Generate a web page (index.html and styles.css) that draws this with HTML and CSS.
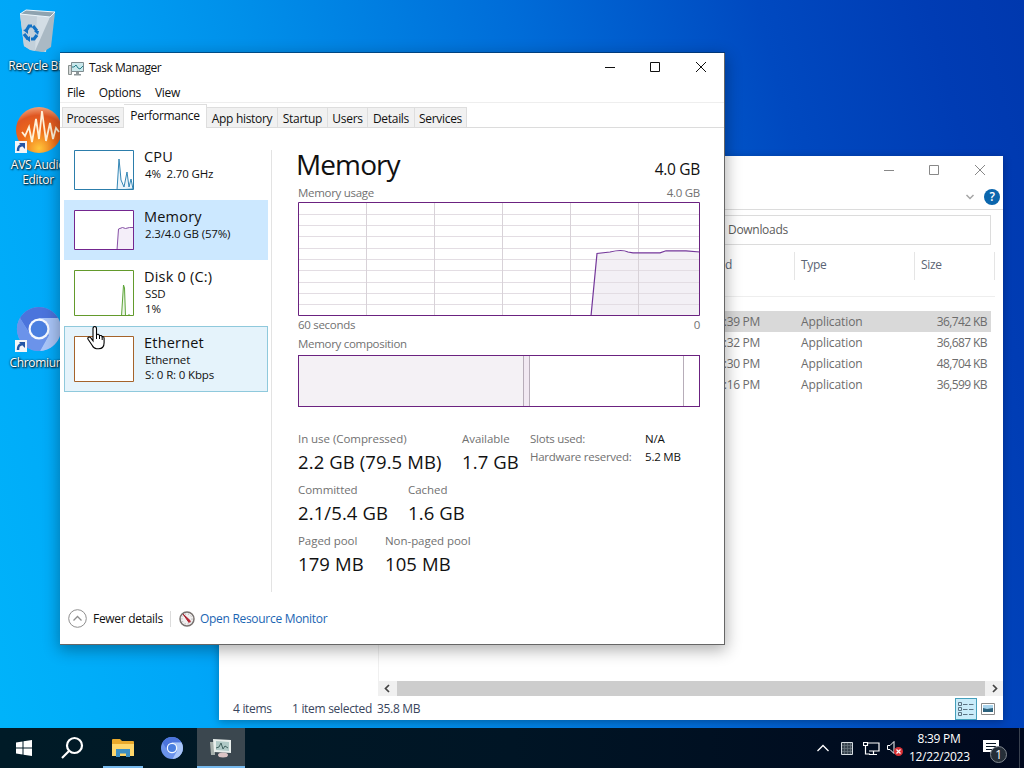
FILE: index.html
```html
<!DOCTYPE html>
<html lang="en">
<head>
  <meta charset="UTF-8">
  <meta name="viewport" content="width=device-width, initial-scale=1.0">
  <title>Task Manager</title>
  <link rel="stylesheet" href="styles.css">
</head>
<body>
  <div class="desktop">
    <!-- Desktop icons -->
    <div class="shortcut recycle">
      <svg width="44" height="46" viewBox="0 0 44 46">
        <path d="M4 6l6-4 29 2-5 5z" fill="#8fa3b0"/>
        <path d="M4 6l30 3-4 35-15-2-7-4z" fill="#d3dde5"/>
        <path d="M34 9l5-5-4 35-8 5-8-1z" fill="#aab9c4"/>
        <path d="M4 6l17 2-2 35-5-1-6-4z" fill="#c3d0da"/>
        <path d="M4 6l6-4 29 2-5 5z" fill="none" stroke="#eef5fa" stroke-width="1"/>
        <g fill="none" stroke="#1271c4" stroke-width="3.200"><path d="M10 23l3-5h3M17 18l4 5M21 27l-3 4h-3M12 31l-4-5"/></g>
        <path d="M18 23h5l-1 4zM14 28v6l-4-3zM7 22l5-1v5z" fill="#1271c4"/>
      </svg>
      <span>Recycle Bin</span>
    </div>
    <div class="shortcut avs">
      <svg width="50" height="50" viewBox="0 0 50 50">
        <defs><radialGradient id="orange" cx="50%" cy="90%" r="90%"><stop offset="0" stop-color="#ffc53a"/><stop offset=".45" stop-color="#ee6a18"/><stop offset=".8" stop-color="#e05722"/><stop offset="1" stop-color="#f0a078"/></radialGradient></defs>
        <circle cx="26" cy="24" r="23" fill="url(#orange)"/>
        <path d="M9 26l3 4 4-9 3 15 4-23 3 20 3-28 4 30 4-18 3 16 3-11 3 4" fill="none" stroke="#fff1d8" stroke-width="1.800"/>
        <rect x="2" y="35" width="12" height="12" fill="#f4f5f7"/>
        <path d="M5 45c0-4 1-5 4-6" fill="none" stroke="#2355a5" stroke-width="2.500"/><path d="M6 37h6v6z" fill="#2355a5"/>
      </svg>
      <span>AVS Audio<br>Editor</span>
    </div>
    <div class="shortcut chromium">
      <svg width="50" height="48" viewBox="0 0 50 48">
        <circle cx="26" cy="23" r="22" fill="#7da5f3"/>
        <path d="M7 12A22 22 0 0 1 45 12L26 12l-9 16z" fill="#4b74dc"/>
        <path d="M26 12h19a22 22 0 0 1-18 33l9-16z" fill="#a9c5f8"/>
        <path d="M7 12A22 22 0 0 0 27 45l9-16-19 0z" fill="#6b93ea"/>
        <circle cx="26" cy="23" r="10.500" fill="#f4f9ff"/><circle cx="26" cy="23" r="8.300" fill="#4a7fe0"/>
        <rect x="2" y="34" width="12" height="12" fill="#f4f5f7"/>
        <path d="M5 44c0-4 1-5 4-6" fill="none" stroke="#2355a5" stroke-width="2.500"/><path d="M6 36h6v6z" fill="#2355a5"/>
      </svg>
      <span>Chromium</span>
    </div>

    <!-- File Explorer -->
    <div class="window explorer">
      <div class="controls">
        <svg width="12" height="12"><path d="M0 6.500h10"/></svg>
        <svg width="12" height="12"><path d="M.5 1.500h9v9h-9z"/></svg>
        <svg width="12" height="12"><path d="M1 1l10 10M11 1L1 11"/></svg>
      </div>
      <div class="ribbon">
        <svg width="10" height="8" viewBox="0 0 10 8"><path d="M1.500 2l3.500 3.500 3.500-3.500" fill="none" stroke="#a5a5a5" stroke-width="1.500"/></svg>
        <span class="help">?</span>
      </div>
      <div class="address"><span>Downloads</span></div>
      <div class="columns">
        <span class="date">Date modified</span>
        <span class="type">Type</span>
        <span class="size">Size</span>
      </div>
      <div class="files">
        <div class="file selected"><span class="date">8:39 PM</span><span class="type">Application</span><span class="size">36,742 KB</span></div>
        <div class="file"><span class="date">8:32 PM</span><span class="type">Application</span><span class="size">36,687 KB</span></div>
        <div class="file"><span class="date">8:30 PM</span><span class="type">Application</span><span class="size">48,704 KB</span></div>
        <div class="file"><span class="date">8:16 PM</span><span class="type">Application</span><span class="size">36,599 KB</span></div>
      </div>
      <div class="scrollbar">
        <svg width="8" height="9"><path d="M6 1L2.500 4.500 6 8"/></svg>
        <div class="thumb"></div>
        <svg width="8" height="9"><path d="M2 1l3.500 3.500L2 8"/></svg>
      </div>
      <div class="status">
        <span class="items">4 items</span>
        <span class="picked">1 item selected</span>
        <span>35.8 MB</span>
        <div class="views">
          <div class="view active">
            <svg width="16" height="14" fill="none" stroke="#5c7484"><path d="M.5.500h3v3h-3zM.5 5.500h3v3h-3zM.5 10.500h3v3h-3zM5 2.500h4.500M11 2.500h4.500M5 7.500h4.500M11 7.500h4.500M5 12.500h4.500M11 12.500h4.500"/></svg>
          </div>
          <div class="view">
            <svg width="14" height="12"><path d="M.5.500h13v11H.5z" fill="#fff" stroke="#8a8a8a"/><path d="M2 2h10v7H2z" fill="#a9d4ed"/><path d="M2 5l4 1 6-1v4H2z" fill="#2b617c"/></svg>
          </div>
        </div>
      </div>
    </div>

    <!-- Task Manager -->
    <div class="window taskmgr">
      <div class="titlebar">
        <svg width="16" height="15" viewBox="0 0 16 15"><path d="M.5 4.500h3v9h-3z" fill="#d4d8d8" stroke="#89918f"/><path d="M3.500 1.500h12v9h-12z" fill="#c9e8ec" stroke="#7f8c90"/><path d="M4 6h2l2-2 2 3 2 1 3-3" fill="none" stroke="#267e88"/><path d="M8 11h3v2h2v1.500H6V13h2z" fill="#8e9799"/></svg>
        <span class="title">Task Manager</span>
        <div class="controls">
          <svg width="12" height="12"><path d="M0 6.500h10"/></svg>
          <svg width="12" height="12"><path d="M.5 1.500h9v9h-9z"/></svg>
          <svg width="12" height="12"><path d="M1 1l10 10M11 1L1 11"/></svg>
        </div>
      </div>
      <div class="menu"><span>File</span><span>Options</span><span>View</span></div>
      <div class="tabs">
        <div class="tab">Processes</div>
        <div class="tab active">Performance</div>
        <div class="tab">App history</div>
        <div class="tab">Startup</div>
        <div class="tab">Users</div>
        <div class="tab">Details</div>
        <div class="tab">Services</div>
      </div>

      <div class="content">
        <div class="sidebar">
          <div class="item">
            <svg class="mini" width="60" height="40"><path d="M43 40l2-31 1 10 1 11 3 7 3-15 2 15 2-8 2 10z" fill="#eaf4fa" stroke="#3486b5"/><path class="frame" d="M.5.500h59v39H.5z" stroke="#2c7dab"/></svg>
            <div><h2>CPU</h2><p>4% &nbsp;2.70 GHz</p></div>
          </div>
          <div class="item current">
            <svg class="mini" width="60" height="40"><path d="M43 40l1.500-21 4-1.500 3 1 4-1h5V40z" fill="#f4eef9" stroke="#8650a5"/><path class="frame" d="M.5.500h59v39H.5z" stroke="#74268f"/></svg>
            <div><h2>Memory</h2><p>2.3/4.0 GB (57%)</p></div>
          </div>
          <div class="item tall">
            <svg class="mini" width="60" height="46"><path d="M47.500 46l2-31 1 3 1 28M54 45h2" fill="#edf6e8" stroke="#5ca437"/><path class="frame" d="M.5.500h59v45H.5z" stroke="#639a2c"/></svg>
            <div><h2>Disk 0 (C:)</h2><p>SSD</p><p>1%</p></div>
          </div>
          <div class="item tall hover">
            <svg class="mini" width="60" height="46"><path class="frame" d="M.5.500h59v45H.5z" stroke="#a5632b"/></svg>
            <div><h2>Ethernet</h2><p>Ethernet</p><p>S: 0 R: 0 Kbps</p></div>
          </div>
        </div>

        <div class="details">
          <div class="heading"><h1>Memory</h1><span>4.0 GB</span></div>
          <div class="caption usage"><span>Memory usage</span><span>4.0 GB</span></div>
          <svg class="chart" width="402" height="114">
            <path d="M293 114l6-62.500 13-1.500q12-3 18 0l5 .8h27l6-2h20l14 1.200v64z" fill="#f3f0f5"/>
            <path d="M1 12.500h400M1 23.500h400M1 34.500h400M1 46.500h400M1 57.500h400M1 68.500h400M1 80.500h400M1 91.500h400M1 102.500h400" stroke="#e3dde3"/>
            <path d="M68.500 1v112M136.500 1v112M204.500 1v112M272.500 1v112M340.500 1v112" stroke="#d8d2d8"/>
            <path d="M293 114l6-62.500 13-1.500q12-3 18 0l5 .8h27l6-2h20l14 1.200" fill="none" stroke="#74379a" stroke-width="1.200"/>
            <path d="M.5.500h401v113H.5z" fill="none" stroke="#6b2280"/>
          </svg>
          <div class="caption time"><span>60 seconds</span><span>0</span></div>
          <div class="caption composition"><span>Memory composition</span></div>
          <div class="memory-bar"><div class="in-use"></div><div class="modified"></div><div class="standby"></div><div class="free"></div></div>
          <div class="stats">
            <div class="numbers">
              <div class="row">
                <div class="stat in-use-stat"><p>In use (Compressed)</p><strong>2.2 GB (79.5 MB)</strong></div>
                <div class="stat"><p>Available</p><strong>1.7 GB</strong></div>
              </div>
              <div class="row">
                <div class="stat committed"><p>Committed</p><strong>2.1/5.4 GB</strong></div>
                <div class="stat"><p>Cached</p><strong>1.6 GB</strong></div>
              </div>
              <div class="row">
                <div class="stat paged"><p>Paged pool</p><strong>179 MB</strong></div>
                <div class="stat"><p>Non-paged pool</p><strong>105 MB</strong></div>
              </div>
            </div>
            <dl class="hardware">
              <dt>Slots used:</dt><dd>N/A</dd>
              <dt>Hardware reserved:</dt><dd>5.2 MB</dd>
            </dl>
          </div>
        </div>
      </div>

      <div class="footer">
        <svg width="19" height="19"><circle cx="9.500" cy="9.500" r="8.800" fill="#fff" stroke="#8e8e8e"/><path d="M5.500 11.500l4-4 4 4" fill="none" stroke="#8e8e8e" stroke-width="1.300"/></svg>
        <span class="fewer">Fewer details</span>
        <svg class="gauge" width="16" height="16"><circle cx="8" cy="8" r="7" fill="#f1efef" stroke="#77716f" stroke-width="1.500"/><circle cx="8" cy="8" r="5" fill="none" stroke="#aaa" stroke-dasharray="1 2"/><path d="M4 3l7.500 7-1.500 1.500z" fill="#c32232" stroke="#a81e2d"/></svg>
        <span class="link">Open Resource Monitor</span>
      </div>
    </div>

    <svg class="cursor" width="19" height="25" viewBox="0 0 19 25"><path d="M7 15V3c0-3 3.500-3 3.500 0v6c1-1 2.700-.6 3 1 1-.7 2.300-.3 2.600 1 1-.4 2 .2 2 1.500V17c0 4-2.500 6-5.500 6h-2c-2.500 0-3.500-1.500-4.500-3.500l-4-6c-1-2 1-3 2.500-1.600z" transform="translate(-1 -.2)" fill="#fff" stroke="#000" stroke-width="1.100"/><path d="M9.500 8v5M12.500 9.500V13M15.200 11v3" stroke="#000"/></svg>

    <!-- Taskbar -->
    <div class="taskbar">
      <div class="task"><svg width="18" height="18" fill="#fff"><path d="M1 3.500l6.500-1v6H1zM8.500 2.300L17 1v7.500H8.500zM1 9.500h6.500v6L1 14.500zM8.500 9.500H17V17l-8.500-1.300z"/></svg></div>
      <div class="task"><svg width="24" height="24" fill="none" stroke="#fff" stroke-width="2.200"><circle cx="13.500" cy="9.500" r="7.500"/><path d="M8 15l-7 7"/></svg></div>
      <div class="task running"><svg width="22" height="20"><path d="M0 2q0-1 1-1h7l2 2h11q1 0 1 1v14H0z" fill="#e9a92c"/><path d="M0 6h22v12H0z" fill="#ffd76b"/><path d="M4 11h14v8h-4v-3.500H8V19H4z" fill="#3c8fc4"/></svg></div>
      <div class="task"><svg width="22" height="22" viewBox="3 1 44 44"><circle cx="25" cy="23" r="22" fill="#6b93ea"/><path d="M6 12A22 22 0 0 1 44 12L25 12l-9 16z" fill="#4b74dc"/><path d="M25 12h19a22 22 0 0 1-18 33l9-16z" fill="#a9c5f8"/><circle cx="25" cy="23" r="10.500" fill="#f4f9ff"/><circle cx="25" cy="23" r="8" fill="#4a7fe0"/></svg></div>
      <div class="task running open"><svg width="24" height="22"><path d="M1 5h5v13H2z" fill="#a7b0ac"/><path d="M4 2l18 1v13L5 15z" fill="#e8eeeb"/><path d="M7 4l13 1v9L7 13z" fill="#afc9c6"/><path d="M7 11l3-1 2-4 2 6 2-3 3 2" fill="none" stroke="#41625f"/><ellipse cx="14" cy="18" rx="5" ry="2.500" fill="#dcc4c4"/></svg></div>
      <div class="tray">
        <svg class="chevron" width="12" height="8" fill="none" stroke="#fff" stroke-width="1.300"><path d="M.5 7L6 1.500 11.500 7"/></svg>
        <svg class="grid-icon" width="12" height="13"><path d="M.5.500h11v12H.5z" fill="#36424d" stroke="#d6dde2"/><path d="M1 3.500h10M1 6.500h10M1 9.500h10M3.500 1v11M6.500 1v11M9.500 1v11" stroke="#6c7780" stroke-width=".7"/></svg>
        <svg class="network" width="17" height="15" fill="none" stroke="#fff" stroke-width="1.200"><path d="M4 2h12v8H6M10.500 10v3M6 13.500h8M.5 1.500h4v3h-4zM2.500 4.500V13H7"/></svg>
        <svg class="volume" width="17" height="15"><path d="M.5 4.500H3l4-4v12l-4-4H.5z" fill="none" stroke="#fff"/><circle cx="11.500" cy="10.500" r="4.500" fill="#d93035"/><path d="M9.500 8.500l4 4M13.500 8.500l-4 4" stroke="#fff" stroke-width="1.200"/></svg>
        <div class="clock"><span>8:39 PM</span><span>12/22/2023</span></div>
        <div class="notices">
          <svg width="17" height="16"><path d="M0 0h16v12h-5v4l-4-4H0z" fill="#fff"/><path d="M3 3.500h10M3 6.500h10M3 9.500h6" stroke="#071523"/></svg>
          <span class="count">1</span>
        </div>
      </div>
    </div>
  </div>
</body>
</html>
```
FILE: styles.css
```css
:root {
  --purple: #6b2280;
  --muted: #717171;
  --border: #dcdcdc;
}

* {
  box-sizing: border-box;
}

body {
  margin: 0;
  font-family: "Open Sans", "Noto Sans", sans-serif;
  font-size: 12px;
  line-height: 16px;
  letter-spacing: -0.3px;
  color: #111;
}

h1, h2, p, dl, dd {
  margin: 0;
  font-weight: 400;
}

svg {
  display: block;
  flex: none;
}

.desktop {
  position: relative;
  width: 1024px;
  height: 768px;
  overflow: hidden;
  background: linear-gradient(76deg, #00b4fa 0%, #00a6f8 18%, #0090ea 35%, #006cd8 58%, #0049c0 78%, #003cb4 92%, #0038ae 100%);
}

/* Desktop icons */
.shortcut {
  position: absolute;
  left: 0;
  width: 76px;
  display: flex;
  flex-direction: column;
  align-items: center;
  color: #fff;
  text-align: center;
  line-height: 15px;
  text-shadow: 1px 1px 2px #000, 0 0 2px rgba(0, 0, 0, 0.8);
}

.recycle { top: 8px; }
.recycle span { margin-top: 4px; }
.avs { top: 106px; }
.avs span { margin-top: 1px; }
.chromium { top: 306px; }
.chromium span { margin-top: 1px; }

/* Windows */
.window {
  position: absolute;
  background: #fff;
  display: flex;
  flex-direction: column;
}

.controls {
  display: flex;
  gap: 33px;
  margin-left: auto;
  fill: none;
  stroke: #111;
}

.explorer {
  left: 219px;
  top: 156px;
  width: 784px;
  height: 564px;
  color: #5b5b5b;
  box-shadow: 0 2px 8px rgba(0, 0, 0, 0.28);
}

.explorer .controls {
  stroke: #888;
  height: 27px;
  padding: 8px 17px 0 0;
}

.ribbon {
  height: 27px;
  border-bottom: 1px solid var(--border);
  display: flex;
  justify-content: flex-end;
  align-items: center;
  gap: 9px;
  padding: 2px 3px 0 0;
}

.help {
  width: 16px;
  height: 16px;
  border-radius: 50%;
  background: #0b66ad;
  color: #fff;
  font-weight: 600;
  text-align: center;
}

.address {
  width: 472px;
  height: 30px;
  margin: 5px 12px 0 auto;
  padding: 6px 0 0 208px;
  border: 1px solid var(--border);
}

.columns {
  display: flex;
  margin-left: 160px;
  height: 52px;
  padding-top: 7px;
  border-bottom: 1px solid #eee;
  margin-right: 8px;
  color: #5b6575;
}

.columns span {
  height: 28px;
  padding-top: 5px;
  border-right: 1px solid #e5e5e5;
}

.columns .date { width: 416px; padding-right: 62px; text-align: right; }
.columns .type { width: 120px; padding-left: 6px; }
.columns .size { width: 80px; padding-left: 6px; }

.files {
  flex: 1;
  margin-left: 159px;
  padding-top: 14px;
  border-left: 1px solid #f0f0f0;
}

.file {
  display: flex;
  height: 21px;
  line-height: 21px;
  margin-right: 12px;
  color: #6c6c6c;
}

.file.selected { background: #d9d9d9; }
.file .date { width: 381px; text-align: right; }
.file .type { width: 120px; margin-left: 41px; letter-spacing: -0.1px; }
.file .size { flex: 1; text-align: right; padding-right: 4px; letter-spacing: -0.6px; }

.scrollbar {
  margin-left: 159px;
  height: 15px;
  background: #f0f0f0;
  display: flex;
  align-items: center;
  justify-content: space-between;
  padding: 0 4px 0 5px;
  fill: none;
  stroke: #444;
  stroke-width: 1.7;
}

.thumb {
  width: 588px;
  height: 15px;
  background: #cdcdcd;
}

.status {
  height: 24px;
  display: flex;
  align-items: center;
  padding: 2px 0 0 14px;
  color: #39455d;
}

.status .items { width: 59px; }
.status .picked { width: 85px; }

.views {
  display: flex;
  margin-left: auto;
  padding-right: 4px;
}

.view {
  width: 22px;
  height: 22px;
  display: flex;
  align-items: center;
  justify-content: center;
}

.view.active {
  background: #c9ecfa;
  border: 1px solid #459fbb;
}

/* Task Manager */
.taskmgr {
  left: 60px;
  top: 53px;
  width: 665px;
  height: 592px;
  border-right: 1px solid #666;
  border-bottom: 1px solid #666;
  box-shadow: 0 -1px 0 rgba(0, 45, 90, 0.65), 0 4px 15px 1px rgba(0, 0, 0, 0.32);
}

.titlebar {
  display: flex;
  height: 30px;
  padding: 8px 17px 0 8px;
}

.title {
  margin: -1px 0 0 5px;
  letter-spacing: -0.5px;
}

.menu {
  height: 20px;
  display: flex;
  gap: 14px;
  padding: 2px 7px 0;
  border-bottom: 1px solid #eee;
}

.tabs {
  height: 25px;
  display: grid;
  grid-template-columns: 62px 83px 71px 50px 40px 47px 52px;
  align-items: end;
  padding-left: 2px;
  border-bottom: 1px solid var(--border);
}

.tab {
  height: 20px;
  line-height: 21px;
  text-align: center;
  background: #f1f1f1;
  border: 1px solid #dedede;
  border-width: 1px 1px 0 0;
}

.tab:first-child { border-left-width: 1px; }

.tab.active {
  height: 24px;
  margin-bottom: -1px;
  line-height: 22px;
  background: #fff;
}

.content {
  display: flex;
  height: 465px;
}

.sidebar {
  width: 212px;
  height: 442px;
  margin-top: 22px;
  border-right: 1px solid #e3e3e3;
}

.item {
  width: 204px;
  height: 60px;
  margin-left: 4px;
  padding: 9px 0 0 9px;
  border: 1px solid transparent;
  display: flex;
  gap: 10px;
}

.item:first-child { margin-top: -10px; }
.item.tall { height: 66px; }
.item.current { background: #cce8ff; }
.item.hover { background: #e5f3fb; border-color: #8fc9dc; }

.mini { background: #fff; }
.frame { fill: none; }

.item h2 {
  font-size: 14.5px;
  line-height: 16px;
  margin-top: -1px;
  letter-spacing: 0.2px;
}

.item p {
  font-size: 11.5px;
  line-height: 15px;
  margin-left: 1px;
  letter-spacing: -0.15px;
}

.item h2 + p {
  height: 16px;
  padding-top: 1px;
}

.details {
  width: 402px;
  margin-left: 26px;
}

.heading {
  height: 57px;
  display: flex;
  justify-content: space-between;
  align-items: baseline;
  padding-top: 17px;
  font-size: 15.5px;
}

.heading h1 {
  font-size: 28px;
  line-height: 38px;
  margin-left: -2px;
  letter-spacing: -0.9px;
}

.caption {
  display: flex;
  justify-content: space-between;
  color: var(--muted);
  font-size: 11.5px;
  letter-spacing: -0.3px;
}

.usage { height: 17px; }
.time { margin-top: 1px; }
.composition { margin-top: 3px; }

.memory-bar {
  height: 52px;
  margin-top: 3px;
  border: 1px solid var(--purple);
  display: flex;
}

.memory-bar div {
  border-right: 1px solid #b7adb9;
}

.in-use { width: 225px; background: #f4f1f5; }
.modified { width: 6px; background: #f1e9f2; }
.standby { width: 154px; }
.memory-bar .free { flex: 1; border-right: 0; }

.stats {
  display: flex;
  margin-top: 24px;
}

.numbers {
  flex: none;
  width: 232px;
}

.row {
  display: flex;
  height: 51px;
}

.stat p {
  color: var(--muted);
  font-size: 11.5px;
  letter-spacing: -0.05px;
  white-space: nowrap;
}

.stat strong {
  display: block;
  font-size: 18.5px;
  font-weight: 400;
  line-height: 26px;
  letter-spacing: 0.1px;
  margin-top: 2px;
  white-space: nowrap;
}

.in-use-stat { width: 164px; }
.committed { width: 110px; }
.paged { width: 87px; }

.hardware {
  display: grid;
  grid-template-columns: 115px 55px;
  grid-auto-rows: 18px;
  font-size: 11.5px;
  letter-spacing: -0.25px;
}

.hardware dt { color: var(--muted); white-space: nowrap; }
.hardware dd { letter-spacing: -0.2px; white-space: nowrap; }

.footer {
  display: flex;
  align-items: center;
  height: 48px;
  margin-top: 4px;
  padding: 0 0 3px 8px;
}

.fewer {
  width: 78px;
  margin-left: 6px;
  padding-right: 8px;
  border-right: 1px solid var(--border);
  white-space: nowrap;
}

.gauge { margin: 0 5px 0 8px; }
.link { color: #1b65b3; }

.cursor {
  position: absolute;
  left: 87px;
  top: 326px;
}

/* Taskbar */
.taskbar {
  position: absolute;
  left: 0;
  bottom: 0;
  width: 1024px;
  height: 40px;
  display: flex;
  color: #fff;
  background: linear-gradient(90deg, #001b27, #001525 50%, #00081d);
}

.task {
  width: 48px;
  height: 40px;
  margin-right: 1px;
  display: flex;
  align-items: center;
  justify-content: center;
}

.task:nth-child(2) { margin-right: 2px; }

.task.running {
  background: linear-gradient(#76b9ed, #76b9ed) bottom / 40px 2px no-repeat;
}

.task.running.open {
  background: linear-gradient(#76b9ed, #76b9ed) bottom / 48px 2px no-repeat #3b474f;
}

.tray {
  flex: 1;
  display: flex;
  align-items: center;
  justify-content: flex-end;
  padding-right: 4px;
  border-right: 1px solid #39414f;
  margin-right: 4px;
}

.chevron { margin-right: 12px; }
.grid-icon { margin-right: 10px; }
.network { margin-right: 7px; }
.volume { margin-right: 5px; }

.clock {
  width: 60px;
  display: flex;
  flex-direction: column;
  text-align: center;
  line-height: 18px;
}

.notices {
  position: relative;
  margin: 0 15px 0 14px;
}

.count {
  position: absolute;
  left: 7px;
  top: 6px;
  width: 17px;
  height: 17px;
  border: 1px solid #818890;
  border-radius: 50%;
  background: #252e38;
  line-height: 15px;
  text-align: center;
}
```
